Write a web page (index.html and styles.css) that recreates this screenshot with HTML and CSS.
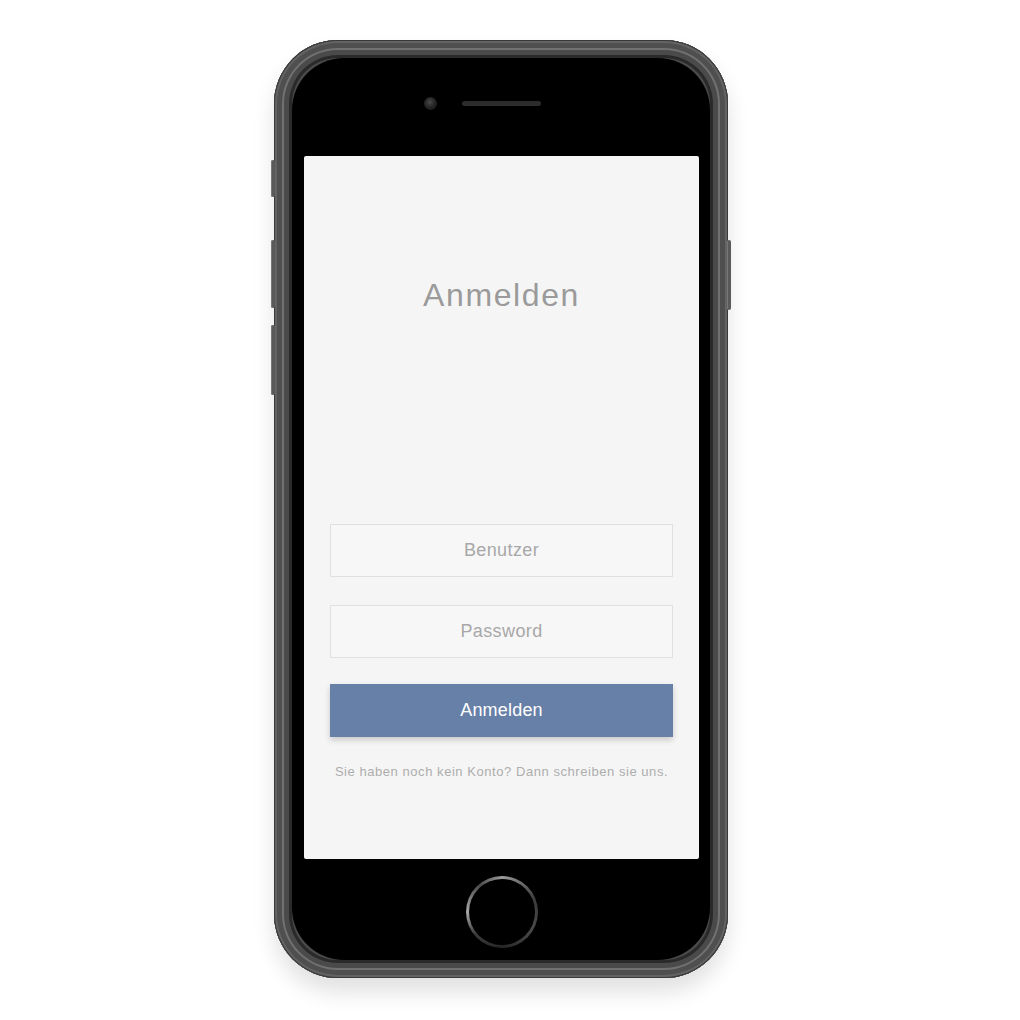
FILE: index.html
```html
<!DOCTYPE html>
<html lang="de">
<head>
<meta charset="utf-8">
<title>Anmelden</title>
<link rel="stylesheet" href="styles.css">
</head>
<body>
<div class="stage">
  <div class="phone">
    <span class="side-btn mute"></span>
    <span class="side-btn vol-up"></span>
    <span class="side-btn vol-down"></span>
    <span class="side-btn power"></span>
    <div class="bezel">
      <div class="top-area">
        <div class="cam-col"><span class="camera"></span></div>
        <span class="speaker"></span>
        <div></div>
      </div>
      <div class="screen">
        <h1 class="title">Anmelden</h1>
        <form class="form">
          <div class="field">Benutzer</div>
          <div class="field">Password</div>
          <div class="btn">Anmelden</div>
        </form>
        <p class="note">Sie haben noch kein Konto? Dann schreiben sie uns.</p>
      </div>
      <div class="bottom-area">
        <div class="home"><div class="home-inner"></div></div>
      </div>
    </div>
  </div>
</div>
</body>
</html>
```

FILE: styles.css
```css
html, body {
  margin: 0;
  padding: 0;
  background: #ffffff;
  font-family: "Liberation Sans", Arial, sans-serif;
}
.stage {
  width: 1020px;
  height: 1020px;
  padding-top: 40px;
  padding-left: 274px;
  box-sizing: border-box;
}
.phone {
  position: relative;
  width: 454px;
  height: 938px;
  box-sizing: border-box;
  border-radius: 64px;
  padding: 18px;
  background: #4a4a4a;
  box-shadow:
    inset 0 0 0 1px #3a3a3a,
    inset 0 0 0 3px #636363,
    inset 0 0 0 8px #4f4f4f,
    inset 0 0 0 10px #717171,
    inset 0 0 0 15px #4a4a4a,
    inset 0 0 0 18px #2a2a2a,
    0 14px 22px rgba(0, 0, 0, 0.12);
}
.side-btn {
  position: absolute;
  width: 4px;
  background: #5a5a5a;
  border-radius: 2px;
  box-shadow: inset 1px 0 0 #777;
}
.mute { left: -3px; top: 120px; height: 37px; }
.vol-up { left: -3px; top: 200px; height: 68px; }
.vol-down { left: -3px; top: 285px; height: 70px; }
.power { right: -3px; top: 200px; height: 70px; }

.bezel {
  height: 100%;
  border-radius: 52px;
  background: #000;
  display: flex;
  flex-direction: column;
  padding: 0 11px 0 12px;
  box-sizing: border-box;
}
.top-area {
  height: 98px;
  flex: none;
  display: grid;
  grid-template-columns: 1fr 79px 1fr;
  align-items: center;
  padding-bottom: 8px;
  box-sizing: border-box;
}
.cam-col {
  display: flex;
  justify-content: flex-end;
  padding-right: 25px;
}
.camera {
  width: 13px;
  height: 13px;
  border-radius: 50%;
  background: radial-gradient(circle at 45% 40%, #4a4a4a 0, #262626 45%, #141414 100%);
}
.speaker {
  width: 79px;
  height: 5px;
  border-radius: 3px;
  background: #2c2c2c;
}
.screen {
  flex: none;
  height: 703px;
  background: #f5f5f5;
  border-radius: 2px;
  padding: 119px 26px 0;
  box-sizing: border-box;
}
.title {
  margin: 0;
  height: 40px;
  line-height: 40px;
  font-size: 32px;
  font-weight: normal;
  color: #9a9a9a;
  text-align: center;
  letter-spacing: 1.6px;
}
.form {
  margin: 209px 0 0;
  display: flex;
  flex-direction: column;
}
.field {
  height: 53px;
  box-sizing: border-box;
  border: 1px solid #e0e0e0;
  background: #f7f7f7;
  display: flex;
  align-items: center;
  justify-content: center;
  font-size: 18px;
  color: #a8a8a8;
  letter-spacing: 0.4px;
  margin-bottom: 28px;
}
.field + .field {
  margin-bottom: 26px;
}
.btn {
  height: 53px;
  background: #6780a7;
  color: #ffffff;
  display: flex;
  align-items: center;
  justify-content: center;
  font-size: 18px;
  letter-spacing: 0.2px;
  box-shadow: 0 3px 6px rgba(0, 0, 0, 0.18);
}
.note {
  margin: 27px 0 0;
  text-align: center;
  font-size: 13px;
  line-height: 16px;
  letter-spacing: 0.55px;
  color: #adadad;
}
.bottom-area {
  flex: 1;
  display: flex;
  justify-content: center;
  padding-top: 17px;
}
.home {
  width: 72px;
  height: 72px;
  border-radius: 50%;
  padding: 3px;
  box-sizing: border-box;
  background: conic-gradient(from 0deg, #9a9a9a, #3a3a3a 70deg, #4a4a4a 120deg, #262626 180deg, #3a3a3a 230deg, #a8a8a8 270deg, #4a4a4a 320deg, #9a9a9a);
}
.home-inner {
  width: 100%;
  height: 100%;
  border-radius: 50%;
  background: #000;
}
```
